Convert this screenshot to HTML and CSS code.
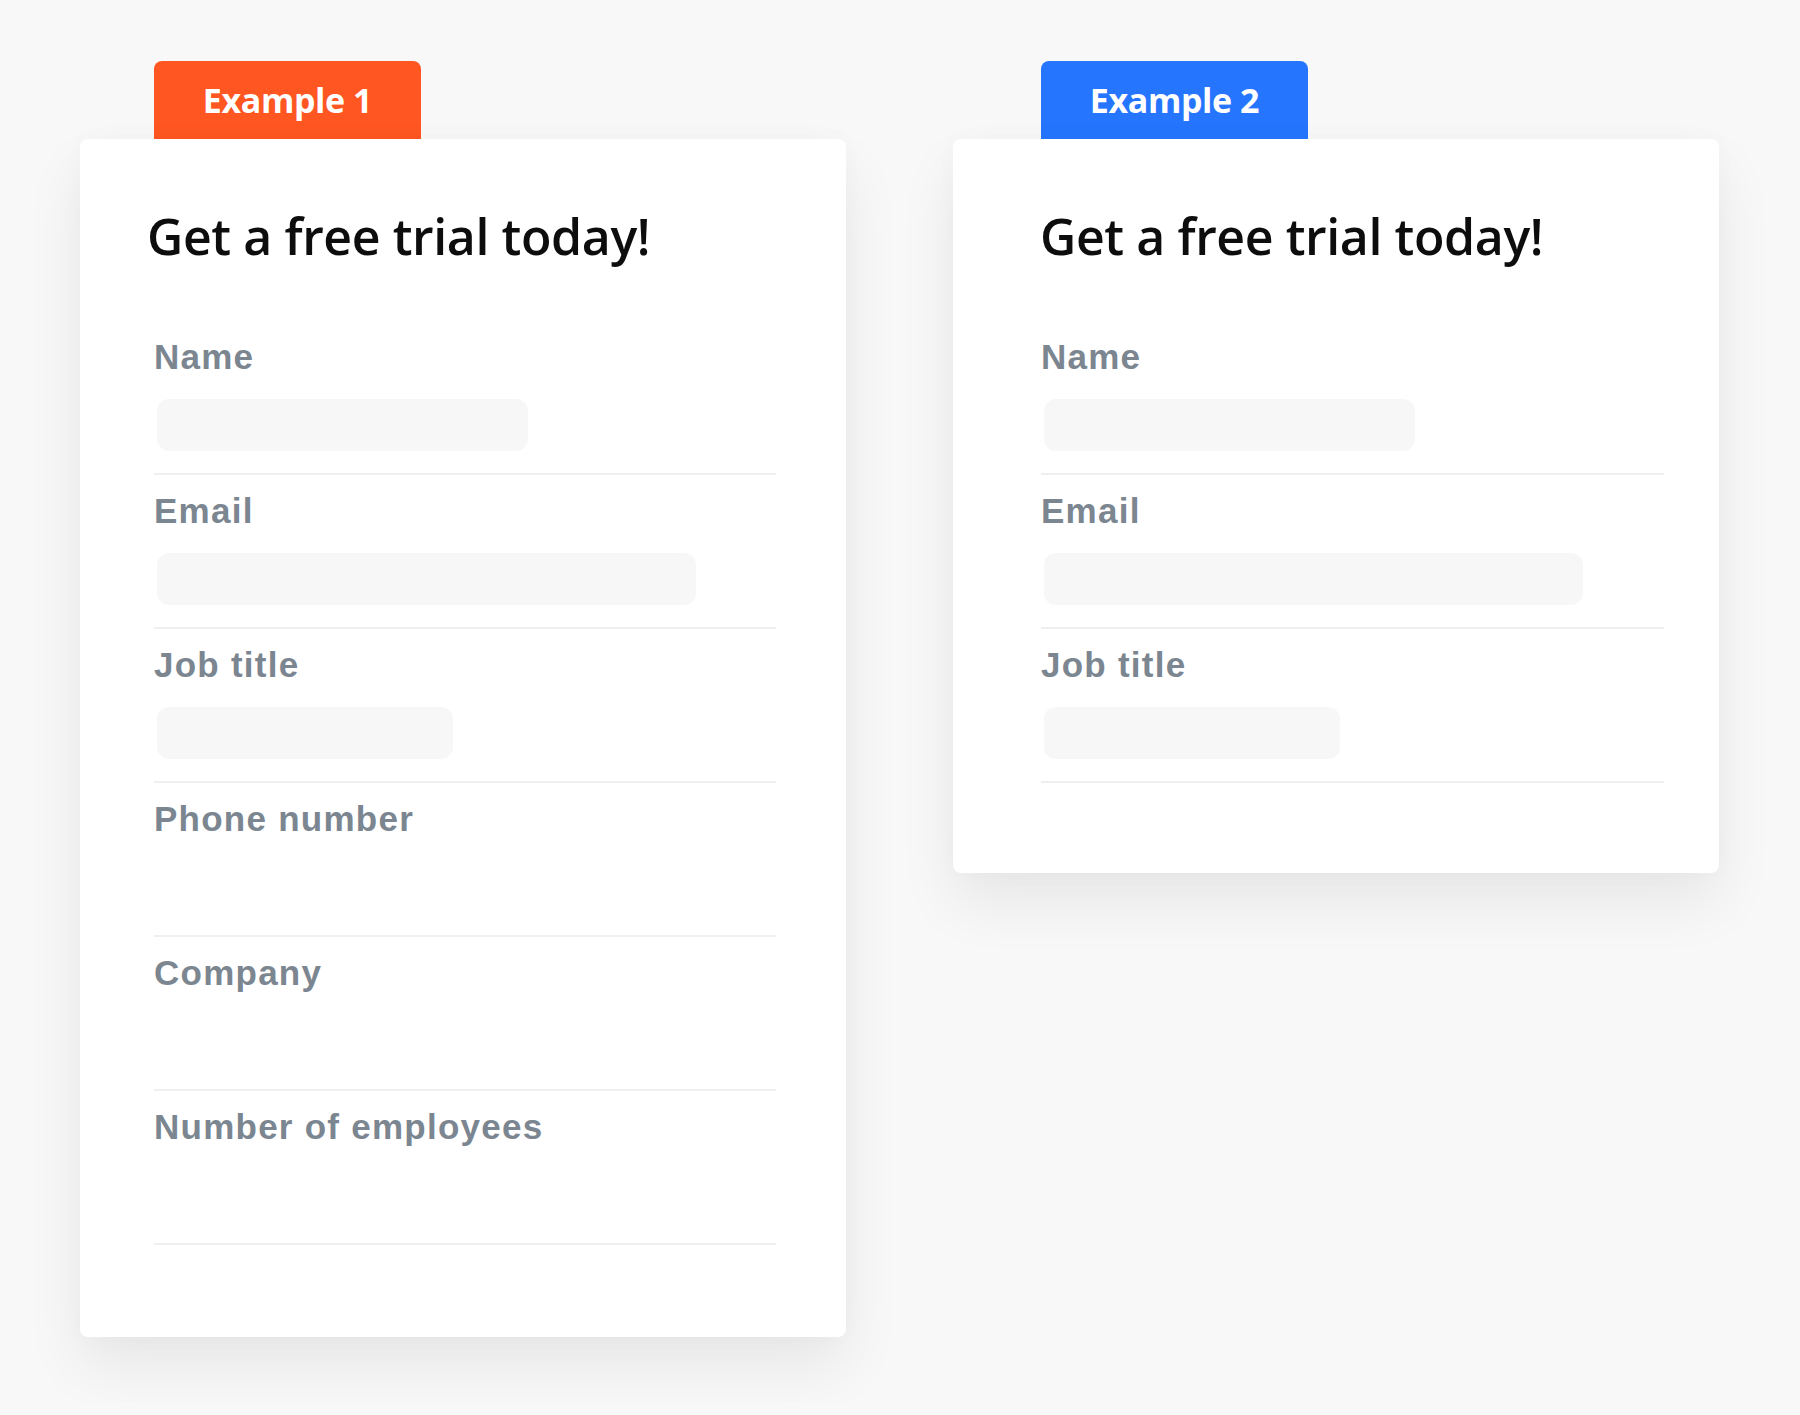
FILE: index.html
```html
<!DOCTYPE html>
<html lang="en">
<head>
    <meta charset="UTF-8">
    <meta name="viewport" content="width=device-width, initial-scale=1.0">
    <title>Free Trial Forms</title>
    <link rel="stylesheet" href="styles.css">
</head>
<body>
    <div class="examples">
        <div class="example example--one">
            <div class="tab tab--orange">Example 1</div>
            <div class="card">
                <h1 class="card-title">Get a free trial today!</h1>
                <div class="field">
                    <div class="field-label">Name</div>
                    <div class="field-box field-box--name"></div>
                </div>
                <div class="field">
                    <div class="field-label">Email</div>
                    <div class="field-box field-box--email"></div>
                </div>
                <div class="field">
                    <div class="field-label">Job title</div>
                    <div class="field-box field-box--job"></div>
                </div>
                <div class="field">
                    <div class="field-label">Phone number</div>
                    <div class="field-box field-box--blank"></div>
                </div>
                <div class="field">
                    <div class="field-label">Company</div>
                    <div class="field-box field-box--blank"></div>
                </div>
                <div class="field">
                    <div class="field-label">Number of employees</div>
                    <div class="field-box field-box--blank"></div>
                </div>
            </div>
        </div>

        <div class="example example--two">
            <div class="tab tab--blue">Example 2</div>
            <div class="card">
                <h1 class="card-title">Get a free trial today!</h1>
                <div class="field">
                    <div class="field-label">Name</div>
                    <div class="field-box field-box--name"></div>
                </div>
                <div class="field">
                    <div class="field-label">Email</div>
                    <div class="field-box field-box--email"></div>
                </div>
                <div class="field">
                    <div class="field-label">Job title</div>
                    <div class="field-box field-box--job"></div>
                </div>
            </div>
        </div>
    </div>
</body>
</html>
```

FILE: styles.css
```css
body {
    margin: 0;
    background-color: #f8f8f8;
    font-family: "Liberation Sans", Arial, sans-serif;
}
.examples {
    display: flex;
    align-items: flex-start;
    gap: 107px;
    padding: 61px 0 66px 80px;
}
.example {
    display: flex;
    flex-direction: column;
    align-items: flex-start;
    width: 766px;
}
.tab {
    width: 267px;
    height: 78px;
    line-height: 78px;
    border-radius: 8px 8px 0 0;
    color: white;
    text-align: center;
    font-family: "Open Sans", "Noto Sans", sans-serif;
    font-weight: 700;
    font-size: 34px;
    letter-spacing: -0.4px;
}
.tab--orange {
    background: #ff5622;
}
.tab--blue {
    background: #2575ff;
}
.card {
    box-sizing: border-box;
    width: 100%;
    background: white;
    border-radius: 8px;
    box-shadow: 0 30px 60px rgba(0, 0, 0, 0.07), 0 0 24px rgba(0, 0, 0, 0.025);
    padding-top: 67px;
}
.card-title {
    margin: 0 0 55px;
    font-family: "Open Sans", "Noto Sans", sans-serif;
    font-weight: 600;
    font-size: 50px;
    line-height: 60px;
    letter-spacing: -0.4px;
    color: #0d0d0d;
}
.example--one .tab {
    margin-left: 74px;
}
.example--one .card {
    padding: 67px 70px 92px 74px;
}
.example--one .card-title {
    margin-left: -7px;
}
.example--two .tab {
    margin-left: 88px;
}
.example--two .card {
    padding: 67px 55px 90px 88px;
}
.example--two .card-title {
    margin-left: -1px;
}
.field {
    padding: 16px 0 22px;
    border-bottom: 2px solid #efefef;
}
.field-label {
    font-weight: 700;
    font-size: 35px;
    line-height: 40px;
    letter-spacing: 1.25px;
    color: #7b8691;
}
.field-box {
    height: 52px;
    margin: 22px 0 0 3px;
    border-radius: 12px;
    background: #f7f7f7;
}
.field-box--name {
    width: 371px;
}
.field-box--email {
    width: 539px;
}
.field-box--job {
    width: 296px;
}
.field-box--blank {
    background: transparent;
}
```
